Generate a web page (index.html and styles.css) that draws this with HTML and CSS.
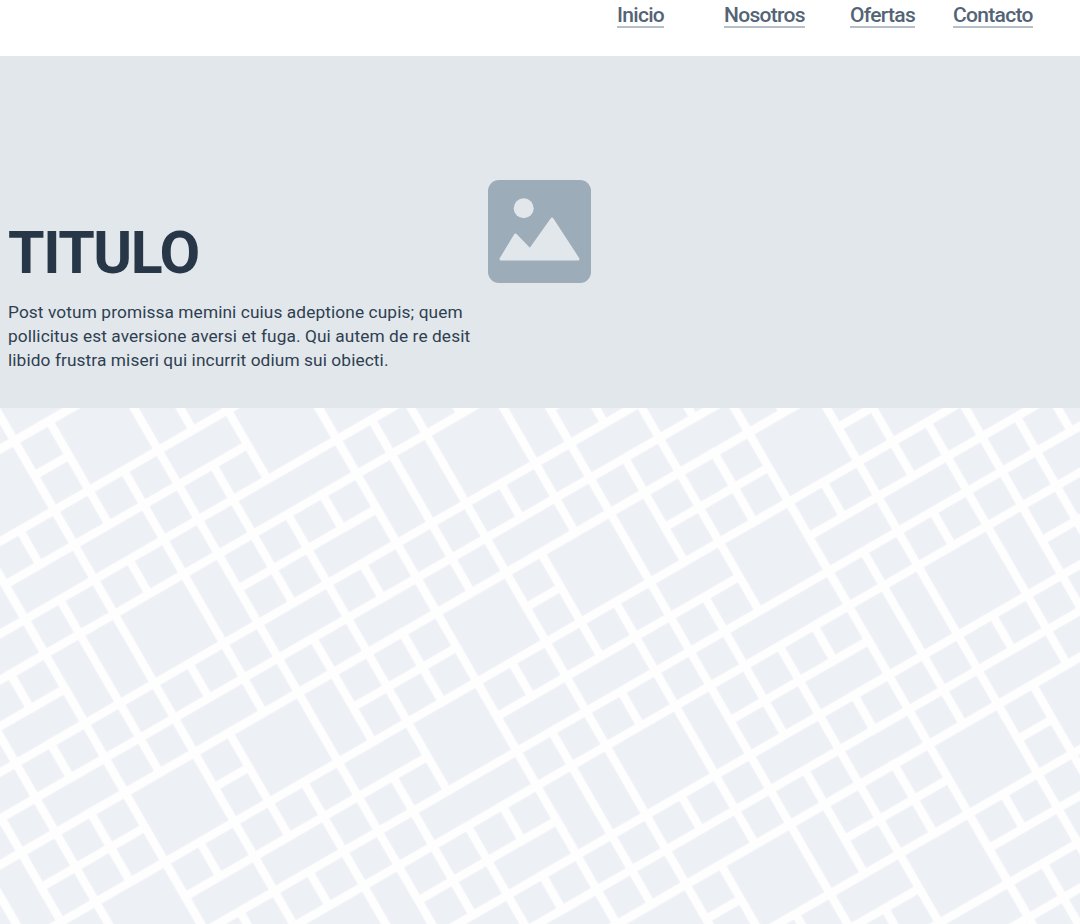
FILE: index.html
```html
<!DOCTYPE html>
<html lang="es">
<head>
  <meta charset="UTF-8">
  <meta name="viewport" content="width=device-width, initial-scale=1.0">
  <title>Titulo</title>
  <link rel="stylesheet" href="styles.css">
</head>
<body>
  <header class="topbar">
    <nav class="nav">
      <a class="nav-link" href="#">Inicio</a>
      <a class="nav-link" href="#">Nosotros</a>
      <a class="nav-link" href="#">Ofertas</a>
      <a class="nav-link" href="#">Contacto</a>
    </nav>
  </header>

  <section class="hero">
    <div class="hero-text">
      <h1 class="hero-title">TITULO</h1>
      <p class="hero-copy">Post votum promissa memini cuius adeptione cupis; quem pollicitus est aversione aversi et fuga. Qui autem de re desit libido frustra miseri qui incurrit odium sui obiecti.</p>
    </div>
    <svg class="hero-icon" viewBox="0 0 103 103" aria-hidden="true">
      <rect width="103" height="103" rx="11" fill="#9dacb9"/>
      <circle cx="35.7" cy="28.3" r="10" fill="#e2e7ec"/>
      <path d="M13 79 27.5 55 42 70 64 39 90 79z" fill="#e2e7ec" stroke="#e2e7ec" stroke-width="3" stroke-linejoin="round"/>
    </svg>
  </section>

  <!-- tile is 9x9 cells of 40, repeated and turned 30deg -->
  <svg class="backdrop" width="1080" height="516" aria-hidden="true">
    <defs>
      <path id="tile-lines" d="
        M20 20h40v40h-40z M60 20h80v80h-80z M140 20h40v40h-40z M180 20h80v80h-80z M260 20h40v80h-40z M300 20h40v40h-40z M340 20h40v40h-40z
        M20 60h40v40h-40z M140 60h40v40h-40z M300 60h40v40h-40z M340 60h40v40h-40z
        M340 100h80v80h-80z M60 100h40v40h-40z M100 100h40v40h-40z M140 100h40v40h-40z M180 100h40v40h-40z M220 100h40v40h-40z M260 100h80v40h-80z
        M60 140h80v40h-80z M140 140h80v40h-80z M220 140h40v40h-40z M260 140h40v40h-40z M300 140h40v40h-40z
        M300 180h120v40h-120z M60 180h40v40h-40z M100 180h40v40h-40z M140 180h40v40h-40z M180 180h40v40h-40z M220 180h40v40h-40z M260 180h40v40h-40z
        M300 220h40v40h-40z M340 220h40v40h-40z M20 220h40v40h-40z M60 220h40v80h-40z M100 220h40v80h-40z M140 220h80v80h-80z M220 220h40v80h-40z M260 220h40v40h-40z
        M340 260h80v40h-80z M260 260h40v40h-40z M300 260h40v40h-40z
        M260 300h80v40h-80z M340 300h40v40h-40z M20 300h40v40h-40z M60 300h40v40h-40z M100 300h40v40h-40z M140 300h40v40h-40z M180 300h40v40h-40z M220 300h40v40h-40z
        M140 340h80v40h-80z M220 340h40v40h-40z M260 340h40v40h-40z M300 340h40v40h-40z M340 340h80v40h-80z M60 340h40v40h-40z M100 340h40v40h-40z
      "/>
      <pattern id="tiles" width="360" height="360" patternUnits="userSpaceOnUse" patternTransform="translate(14.9 -406.2) rotate(-30)">
        <g fill="none" stroke="#fefeff" stroke-width="8.4">
          <use href="#tile-lines"/>
          <use href="#tile-lines" x="-360"/>
          <use href="#tile-lines" y="-360"/>
          <use href="#tile-lines" x="-360" y="-360"/>
        </g>
      </pattern>
    </defs>
    <rect width="1080" height="516" fill="url(#tiles)"/>
  </svg>
</body>
</html>
```

FILE: styles.css
```css
body {
  margin: 0;
  height: 924px;
  overflow: hidden;
  background: #edf0f5;
  font-family: Roboto, "Liberation Sans", sans-serif;
}

/* top navigation */
.topbar {
  height: 56px;
  background: #fff;
  display: flex;
  justify-content: flex-end;
  padding-right: 48px;
}
.nav {
  display: grid;
  grid-template-columns: 71px 90px 67px 79px;
  gap: 36px;
  align-items: start;
  justify-items: start;
  padding-top: 4px;
}
.nav-link {
  color: #536476;
  font-size: 21px;
  font-weight: 500;
  letter-spacing: -0.7px;
  line-height: 22px;
  text-decoration: none;
  border-bottom: 2px solid #b5bfca;
}

/* hero band */
.hero {
  height: 352px;
  background: #e2e7ec;
  display: flex;
}
.hero-text {
  box-sizing: border-box;
  width: 488px;
  padding: 167px 8px 0;
}
.hero-title {
  margin: 0 0 17px;
  color: #273747;
  font-size: 59px;
  line-height: 60px;
  font-weight: 700;
  letter-spacing: -1.4px;
}
.hero-copy {
  margin: 0;
  color: #2f3f50;
  font-size: 17.3px;
  letter-spacing: 0.1px;
  line-height: 24px;
}
.hero-icon {
  width: 103px;
  height: 103px;
  margin-top: 124px;
}

.backdrop {
  display: block;
}
```
